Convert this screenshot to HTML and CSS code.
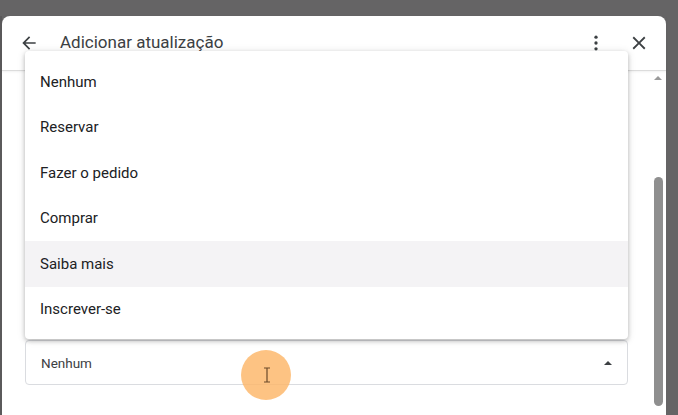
FILE: index.html
```html
<!DOCTYPE html>
<html lang="pt">
<head>
<meta charset="utf-8">
<link rel="stylesheet" href="styles.css">
</head>
<body>
<div class="screen">
  <div class="backdrop-left"></div>
  <div class="dialog">
    <header class="dialog-header">
      <button class="icon-btn back" aria-label="Voltar">
        <svg width="20" height="20" viewBox="0 0 24 24"><path d="M20 11H7.83l5.59-5.59L12 4l-8 8 8 8 1.41-1.41L7.83 13H20v-2z" fill="#3c4043"/></svg>
      </button>
      <h1 class="title">Adicionar atualização</h1>
      <div class="header-actions">
        <button class="icon-btn" aria-label="Mais">
          <svg width="20" height="20" viewBox="0 0 24 24"><circle cx="12" cy="5" r="2" fill="#3c4043"/><circle cx="12" cy="12" r="2" fill="#3c4043"/><circle cx="12" cy="19" r="2" fill="#3c4043"/></svg>
        </button>
        <button class="icon-btn" aria-label="Fechar">
          <svg width="22" height="22" viewBox="0 0 24 24"><path d="M19 6.41L17.59 5 12 10.59 6.41 5 5 6.41 10.59 12 5 17.59 6.41 19 12 13.41 17.59 19 19 17.59 13.41 12z" fill="#3c4043"/></svg>
        </button>
      </div>
    </header>
    <div class="dialog-body">
      <div class="content">
        <div class="select">
          <span class="select-value">Nenhum</span>
          <span class="select-arrow"></span>
        </div>
      </div>
      <div class="scrollbar">
        <span class="scroll-up"></span>
        <div class="scroll-track"><div class="scroll-thumb"></div></div>
      </div>
    </div>
    <ul class="menu">
      <li class="menu-item">Nenhum</li>
      <li class="menu-item">Reservar</li>
      <li class="menu-item">Fazer o pedido</li>
      <li class="menu-item">Comprar</li>
      <li class="menu-item hover">Saiba mais</li>
      <li class="menu-item">Inscrever-se</li>
    </ul>
    <div class="cursor-dot">
      <svg width="8" height="16" viewBox="0 0 8 16"><path d="M1 1h6M4 1v14M1 15h6" stroke="#6b4a2a" stroke-width="1.2" fill="none"/></svg>
    </div>
  </div>
</div>
</body>
</html>
```

FILE: styles.css
```css
* { box-sizing: border-box; }
html, body {
  margin: 0;
  padding: 0;
  width: 678px;
  height: 415px;
  overflow: hidden;
  background: #656465;
  font-family: Roboto, "Noto Sans", "Liberation Sans", sans-serif;
}
.screen {
  display: flex;
  padding-top: 16px;
  height: 415px;
}
.backdrop-left {
  width: 2px;
  background: #5b5a5b;
}
.dialog {
  position: relative;
  width: 664px;
  height: 399px;
  background: #fff;
  border-radius: 8px 8px 0 0;
  display: flex;
  flex-direction: column;
}
.dialog-header {
  height: 55px;
  display: flex;
  align-items: center;
  padding: 0 16px 0 16px;
  border-bottom: 1px solid #dcdcdc;
  box-shadow: 0 1px 2px rgba(0,0,0,0.06);
}
.icon-btn {
  background: none;
  border: 0;
  padding: 0;
  width: 22px;
  height: 22px;
  display: flex;
  align-items: center;
  justify-content: center;
  cursor: pointer;
}
.title {
  margin: 0 0 0 20px;
  font-size: 17px;
  font-weight: 400;
  color: #3c4043;
  flex: 1;
  position: relative;
  top: -1px;
}
.header-actions {
  display: flex;
  gap: 21px;
  align-items: center;
}
.dialog-body {
  flex: 1;
  display: flex;
  min-height: 0;
}
.content {
  flex: 1;
  padding: 269px 23px 0 23px;
}
.select {
  height: 45px;
  border: 1px solid #dadce0;
  border-radius: 4px;
  display: flex;
  align-items: center;
  padding: 0 14px 0 15px;
}
.select-value {
  flex: 1;
  font-size: 13.5px;
  color: #3c4043;
}
.select-arrow {
  width: 0;
  height: 0;
  border-left: 4px solid transparent;
  border-right: 4px solid transparent;
  border-bottom: 4px solid #3c4043;
  margin-right: 1px;
}
.scrollbar {
  width: 14px;
  margin-right: 1px;
  display: flex;
  flex-direction: column;
  align-items: center;
  padding-top: 5px;
}
.scroll-up {
  width: 0;
  height: 0;
  border-left: 4px solid transparent;
  border-right: 4px solid transparent;
  border-bottom: 4px solid #9a9a9a;
}
.scroll-track {
  flex: 1;
  width: 100%;
  padding: 97px 2px 9px 3px;
}
.scroll-thumb {
  height: 100%;
  background: #8f8f8f;
  border-radius: 5px;
}
.menu {
  position: absolute;
  left: 23px;
  top: 35px;
  width: 603px;
  margin: 0;
  padding: 8px 0 7px;
  list-style: none;
  background: #fff;
  border-radius: 4px;
  box-shadow: 0 2px 4px rgba(0,0,0,0.22), 0 1px 8px rgba(0,0,0,0.12);
}
.menu-item {
  height: 45.5px;
  display: flex;
  align-items: center;
  padding-left: 15px;
  font-size: 15px;
  color: #202124;
}
.menu-item.hover {
  background: #f4f3f5;
}
.cursor-dot {
  position: absolute;
  left: 239px;
  top: 334px;
  width: 50px;
  height: 50px;
  border-radius: 50%;
  background: rgba(253, 182, 104, 0.82);
  display: flex;
  align-items: center;
  justify-content: center;
}
.cursor-dot svg { margin-left: 2px; }
```
